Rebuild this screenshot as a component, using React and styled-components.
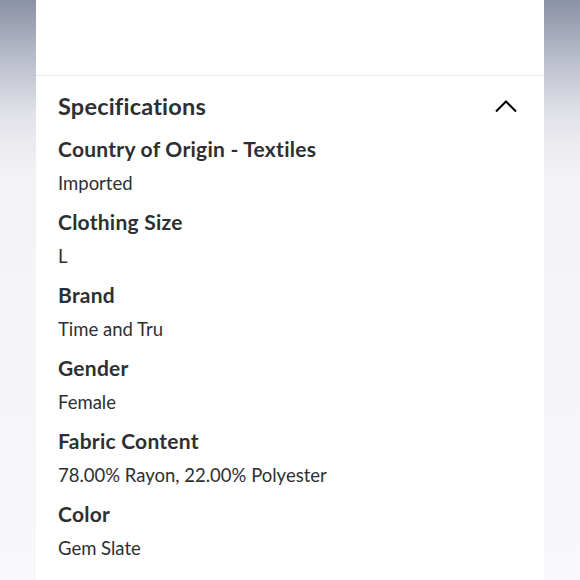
import React from "react";
import styled, { createGlobalStyle } from "styled-components";

const Global = createGlobalStyle`
  html, body { margin: 0; padding: 0; }
  body { font-family: Lato, "Open Sans", sans-serif; color: #2e2f32; }
`;

const Page = styled.div`
  display: flex;
  width: 580px;
  height: 580px;
  overflow: hidden;
`;

const Side = styled.div`
  width: ${(p) => p.$w}px;
  flex-shrink: 0;
  background: linear-gradient(to bottom, #8a90a6 0%, #b9bdca 10%, #e2e3e9 20%, #f3f3f6 30%, #f8f8fa 100%);
`;

const Card = styled.div`
  flex: 1;
  background: #fff;
  display: flex;
  flex-direction: column;
`;

const TopBlank = styled.div`
  height: 75px;
  border-bottom: 1px solid #ececee;
`;

const Section = styled.section`
  padding: 15px 26px 0 22px;
`;

const Header = styled.div`
  display: flex;
  align-items: center;
  justify-content: space-between;
  height: 30px;
  margin-bottom: 15px;
`;

const Title = styled.h2`
  margin: 0;
  font-size: 23.5px;
  letter-spacing: 0.2px;
  font-weight: 700;
  line-height: 30px;
`;

const List = styled.div`
  display: flex;
  flex-direction: column;
  gap: 13px;
`;

const Item = styled.div`
  display: flex;
  flex-direction: column;
  gap: 8px;
`;

const Label = styled.div`
  font-size: 21px;
  letter-spacing: 0.25px;
  font-weight: 700;
  line-height: 26px;
`;

const Value = styled.div`
  font-size: 18.5px;
  font-weight: 400;
  line-height: 26px;
`;

const Chevron = () => (
  <svg width="24" height="14" viewBox="0 0 24 14" fill="none">
    <path d="M2 12.5 L12 2.5 L22 12.5" stroke="#000" strokeWidth="2" />
  </svg>
);

const specs = [
  ["Country of Origin - Textiles", "Imported"],
  ["Clothing Size", "L"],
  ["Brand", "Time and Tru"],
  ["Gender", "Female"],
  ["Fabric Content", "78.00% Rayon, 22.00% Polyester"],
  ["Color", "Gem Slate"],
];

export default function App() {
  return (
    <>
      <Global />
      <Page>
        <Side $w={36} />
        <Card>
          <TopBlank />
          <Section>
            <Header>
              <Title>Specifications</Title>
              <Chevron />
            </Header>
            <List>
              {specs.map(([l, v]) => (
                <Item key={l}>
                  <Label>{l}</Label>
                  <Value>{v}</Value>
                </Item>
              ))}
            </List>
          </Section>
        </Card>
        <Side $w={36} />
      </Page>
    </>
  );
}
